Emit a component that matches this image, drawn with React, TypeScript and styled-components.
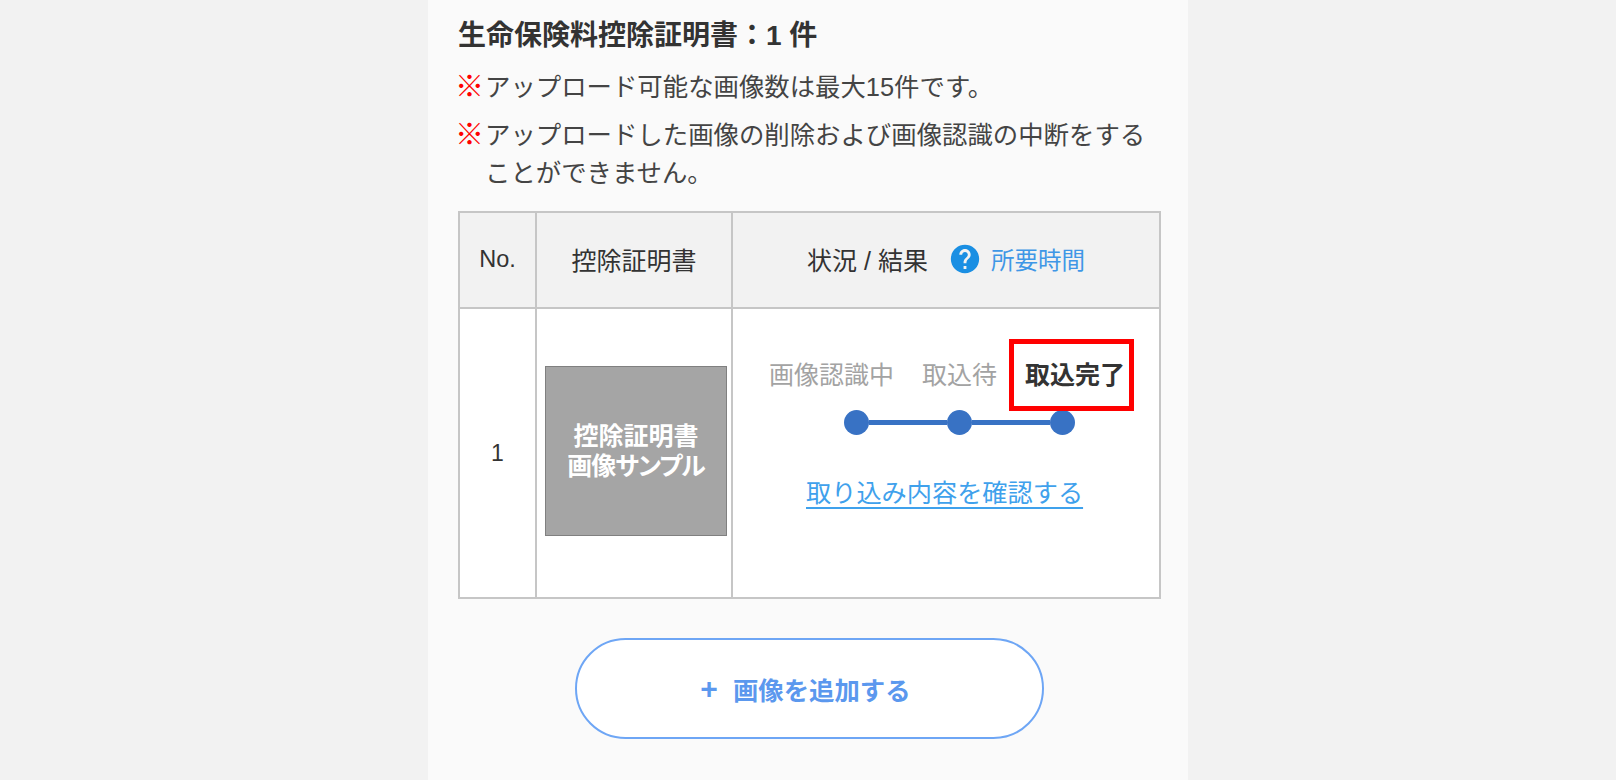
import React from 'react';
import styled, { createGlobalStyle } from 'styled-components';
import { MdHelp } from 'react-icons/md';

const GlobalStyle = createGlobalStyle`
  html, body {
    margin: 0;
    padding: 0;
    height: 780px;
    overflow: hidden;
    background: #f2f2f2;
    font-family: "Liberation Sans", "Noto Sans CJK JP", sans-serif;
    color: #333;
  }
`;

const Panel = styled.main`
  box-sizing: border-box;
  width: 760px;
  height: 780px;
  margin: 0 auto;
  padding: 16px 27px 0 30px;
  background: #fafafa;
`;

const Title = styled.h1`
  margin: 0 0 12px;
  font-size: 28px;
  line-height: 40px;
  font-weight: 700;
  color: #333;
`;

const Note = styled.p`
  display: flex;
  margin: 0 0 10px;
  font-size: 25.4px;
  line-height: 38px;
  color: #444;
`;

const Mark = styled.span`
  flex: none;
  width: 27px;
  margin-left: -3px;
  margin-right: 3px;
  color: #f00;
  font-size: 29px;
  font-weight: 700;
`;

const Table = styled.table`
  width: 703px;
  margin-top: 19px;
  border-collapse: collapse;
  table-layout: fixed;
`;

const HeadCell = styled.th`
  height: 91px;
  padding: 0 0 3px;
  border: 2px solid #c6c6c6;
  background: #f2f2f2;
  font-size: 25px;
  font-weight: 400;
  color: #333;
`;

const NoLabel = styled.span`
  font-size: 23.5px;
`;

const StatusHead = styled.div`
  display: flex;
  align-items: center;
  justify-content: center;
  gap: 4px;
`;

const HelpLink = styled.a`
  display: flex;
  align-items: center;
  gap: 12px;
  margin-left: 16px;
  font-size: 23.5px;
  color: #3f97e6;

  svg {
    color: #1a8fe3;
    margin-right: -3px;
  }
`;

const Cell = styled.td`
  height: 288px;
  padding: 0;
  border: 2px solid #c6c6c6;
  background: #fff;
  vertical-align: top;
`;

const NumberCell = styled(Cell)`
  vertical-align: middle;
  text-align: center;
  font-size: 23px;
`;

const Thumb = styled.div`
  box-sizing: border-box;
  display: flex;
  align-items: center;
  justify-content: center;
  width: 182px;
  height: 170px;
  margin: 57px 0 0 8px;
  border: 1px solid #808080;
  background: #a5a5a5;
  color: #fff;
  font-size: 25px;
  font-feature-settings: "palt";
  line-height: 30px;
  font-weight: 700;
  text-align: center;
`;

const ThumbSub = styled.span`
  letter-spacing: -1px;
`;

const Status = styled.div`
  display: flex;
  flex-direction: column;
  padding: 48px 0 0 36px;
`;

const Steps = styled.ol`
  display: flex;
  gap: 28px;
  margin: 0;
  padding: 0;
  list-style: none;
`;

const Step = styled.li<{ $current?: boolean }>`
  position: relative;
  font-size: 25px;
  line-height: 36px;
  white-space: nowrap;
  font-weight: ${p => (p.$current ? 700 : 400)};
  color: ${p => (p.$current ? '#333' : '#a3a3a3')};
`;

const Highlight = styled.span`
  position: absolute;
  left: -16px;
  right: -9px;
  top: -18px;
  bottom: -18px;
  border: 5px solid #f00;
`;

const Track = styled.div`
  display: flex;
  align-items: center;
  width: 231px;
  margin: 17px 0 0 75px;
`;

const Dot = styled.span`
  flex: none;
  width: 25px;
  height: 25px;
  border-radius: 50%;
  background: #3872c4;
`;

const Line = styled.span`
  flex: 1;
  height: 5px;
  background: #3872c4;
`;

const ConfirmLink = styled.a`
  align-self: flex-start;
  margin: 39px 0 0 37px;
  font-size: 25.2px;
  line-height: 38px;
  color: #3fa1ec;
  text-decoration: underline;
  text-decoration-thickness: 2px;
  text-underline-offset: 5px;
  white-space: nowrap;
`;

const AddButton = styled.button`
  display: flex;
  align-items: center;
  justify-content: center;
  gap: 15px;
  box-sizing: border-box;
  width: 469px;
  height: 101px;
  margin: 39px 0 0 117px;
  padding: 0 8px 0 0;
  border: 2px solid #6ea6f5;
  border-radius: 51px;
  background: #fff;
  color: #5b98ee;
  font-family: inherit;
  font-size: 25.4px;
  font-weight: 700;
`;

const Plus = styled.span`
  font-size: 30px;
  line-height: 1;
`;

export default function App() {
  return (
    <>
      <GlobalStyle />
      <Panel>
        <Title>生命保険料控除証明書：1 件</Title>
        <Note>
          <Mark>※</Mark>
          <span>アップロード可能な画像数は最大15件です。</span>
        </Note>
        <Note>
          <Mark>※</Mark>
          <span>アップロードした画像の削除および画像認識の中断をすることができません。</span>
        </Note>
        <Table>
          <colgroup>
            <col style={{ width: 77 }} />
            <col style={{ width: 196 }} />
            <col />
          </colgroup>
          <thead>
            <tr>
              <HeadCell><NoLabel>No.</NoLabel></HeadCell>
              <HeadCell>控除証明書</HeadCell>
              <HeadCell>
                <StatusHead>
                  状況 / 結果
                  <HelpLink>
                    <MdHelp size={34} />
                    所要時間
                  </HelpLink>
                </StatusHead>
              </HeadCell>
            </tr>
          </thead>
          <tbody>
            <tr>
              <NumberCell>1</NumberCell>
              <Cell>
                <Thumb>
                  <span>控除証明書<br /><ThumbSub>画像サンプル</ThumbSub></span>
                </Thumb>
              </Cell>
              <Cell>
                <Status>
                  <Steps>
                    <Step>画像認識中</Step>
                    <Step>取込待</Step>
                    <Step $current>
                      取込完了
                      <Highlight />
                    </Step>
                  </Steps>
                  <Track>
                    <Dot />
                    <Line />
                    <Dot />
                    <Line />
                    <Dot />
                  </Track>
                  <ConfirmLink>取り込み内容を確認する</ConfirmLink>
                </Status>
              </Cell>
            </tr>
          </tbody>
        </Table>
        <AddButton>
          <Plus>+</Plus>
          画像を追加する
        </AddButton>
      </Panel>
    </>
  );
}
